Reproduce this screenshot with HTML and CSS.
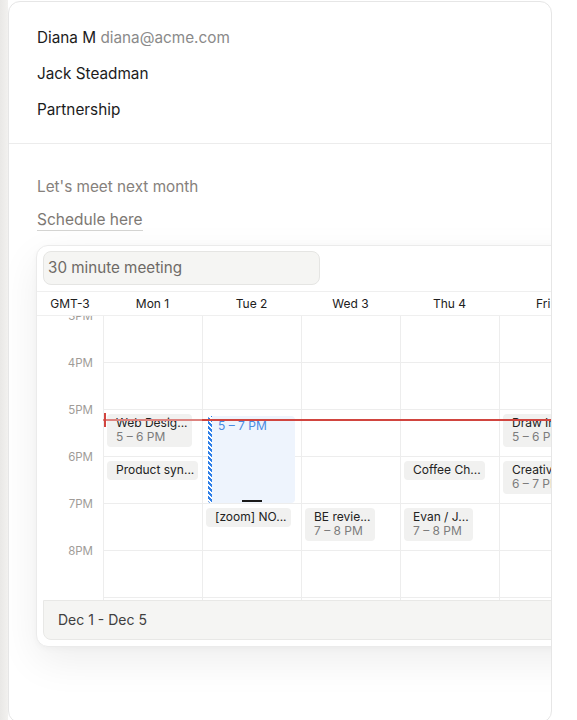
FILE: index.html
```html
<!DOCTYPE html>
<html>
<head>
<meta charset="utf-8">
<link rel="stylesheet" href="styles.css">
</head>
<body>
<div class="page">
  <div class="card">
    <div class="card-head">
      <div class="row"><span class="name">Diana M</span> <span class="email">diana@acme.com</span></div>
      <div class="row">Jack Steadman</div>
      <div class="row">Partnership</div>
    </div>
    <div class="card-body">
      <div class="note">Let's meet next month</div>
      <div class="link-row"><span class="link">Schedule here</span></div>
      <div class="widget">
        <div class="toolbar">
          <div class="input">30 minute meeting</div>
        </div>
        <div class="days-head">
          <div class="tz">GMT-3</div>
          <div class="dh">Mon 1</div>
          <div class="dh">Tue 2</div>
          <div class="dh">Wed 3</div>
          <div class="dh">Thu 4</div>
          <div class="dh">Fri 5</div>
        </div>
        <div class="grid">
          <div class="times">
            <div class="t"><span>3PM</span></div>
            <div class="t"><span>4PM</span></div>
            <div class="t"><span>5PM</span></div>
            <div class="t"><span>6PM</span></div>
            <div class="t"><span>7PM</span></div>
            <div class="t"><span>8PM</span></div>
          </div>
          <div class="day">
            <div class="event" style="top:98px"><div class="ev-title">Web Desig...</div><div class="ev-time">5 – 6 PM</div></div>
            <div class="event" style="top:145px"><div class="ev-title">Product syn...</div></div>
          </div>
          <div class="day">
            <div class="selection" style="top:100px;height:87px">
              <div class="stripe"></div>
              <div class="sel-time">5 – 7 PM</div>
              <div class="handle"></div>
            </div>
            <div class="event" style="top:192px"><div class="ev-title">[zoom] NO...</div></div>
          </div>
          <div class="day">
            <div class="event" style="top:192px"><div class="ev-title">BE revie...</div><div class="ev-time">7 – 8 PM</div></div>
          </div>
          <div class="day">
            <div class="event" style="top:145px"><div class="ev-title">Coffee Ch...</div></div>
            <div class="event" style="top:192px"><div class="ev-title">Evan / J...</div><div class="ev-time">7 – 8 PM</div></div>
          </div>
          <div class="day">
            <div class="event" style="top:98px"><div class="ev-title">Draw In...</div><div class="ev-time">5 – 6 PM</div></div>
            <div class="event" style="top:145px"><div class="ev-title">Creative...</div><div class="ev-time">6 – 7 PM</div></div>
          </div>
          <div class="now" style="top:103px"><div class="now-tick"></div></div>
        </div>
        <div class="footer">Dec 1 - Dec 5</div>
      </div>
    </div>
  </div>
</div>
</body>
</html>
```

FILE: styles.css
```css
* { box-sizing: border-box; }
html, body { margin: 0; padding: 0; }
body {
  background: linear-gradient(to right, #e9e8e6 0, #f2f1ef 8px, #ffffff 8px);
  font-family: Inter, "Noto Sans", sans-serif;
  color: #1a1a1a;
  height: 720px;
  overflow: hidden;
}
.page {
  padding: 1px 25px 0 8px;
}
.card {
  width: 544px;
  height: 722px;
  background: #fff;
  border: 1px solid #e6e6e6;
  border-radius: 12px;
  overflow: hidden;
}
.card-head {
  padding: 26px 28px 23px;
  display: flex;
  flex-direction: column;
  gap: 16px;
  border-bottom: 1px solid #ececec;
}
.row {
  font-size: 15.3px;
  line-height: 20px;
  color: #1c1c1c;
}
.email { color: #8a8a8a; }
.card-body {
  padding: 33px 28px 0 27px;
}
.note {
  font-size: 15.3px;
  line-height: 20px;
  color: #86817c;
  padding-left: 1px;
}
.link-row {
  margin-top: 13px;
  font-size: 15.5px;
  line-height: 20px;
  padding-left: 1px;
}
.link {
  color: #7d7873;
  border-bottom: 1px solid #d4d4d2;
  padding-bottom: 1px;
}
.widget {
  margin-top: 15px;
  width: 563px;
  border: 1px solid #ebebeb;
  border-radius: 12px;
  background: #fff;
  box-shadow: 0 14px 40px rgba(0,0,0,0.07), 0 2px 6px rgba(0,0,0,0.03);
}
.toolbar {
  padding: 5px 6px 6px;
  border-bottom: 1px solid #efefef;
}
.input {
  width: 277px;
  height: 34px;
  background: #f5f5f3;
  border: 1px solid #e5e5e3;
  border-radius: 8px;
  font-size: 15.2px;
  line-height: 32px;
  padding-left: 4px;
  color: #6e6a66;
}
.days-head {
  display: flex;
  height: 24px;
  border-bottom: 1px solid #efefef;
  font-size: 12px;
  line-height: 23px;
  color: #202020;
}
.tz { width: 66px; flex: none; text-align: center; }
.dh { width: 99px; flex: none; text-align: center; }
.grid {
  position: relative;
  display: flex;
  height: 284px;
  overflow: hidden;
}
.times {
  width: 66px;
  flex: none;
}
.t {
  height: 47px;
  text-align: right;
  padding-right: 10px;
}
.t span {
  display: block;
  transform: translateY(-7px);
  line-height: 14px;
  font-size: 11.5px;
  color: #a09c98;
}
.day {
  position: relative;
  width: 99px;
  flex: none;
  border-left: 1px solid #ededed;
  background: repeating-linear-gradient(to bottom, transparent 0 46px, #ededed 46px 47px);
}
.event {
  position: absolute;
  left: 3px;
  background: #f1f1f0;
  border-radius: 4px;
  padding: 2px 4px 3px 9px;
  font-size: 12px;
  line-height: 14px;
  white-space: nowrap;
}
.ev-title { color: #222; }
.ev-time { color: #7c7c7c; }
.selection {
  position: absolute;
  left: 5px;
  width: 87px;
  background: #eef4fd;
  border-radius: 4px;
  padding-left: 10px;
}
.stripe {
  position: absolute;
  left: 0;
  top: 0;
  bottom: 0;
  width: 4px;
  border-radius: 3px 0 0 3px;
  background: repeating-linear-gradient(45deg, #2f7fe8 0 2px, #ffffff 2px 3.5px);
}
.sel-time {
  font-size: 12px;
  line-height: 14px;
  padding-top: 3px;
  color: #4a8ae2;
}
.handle {
  position: absolute;
  bottom: 1px;
  left: 34px;
  width: 20px;
  height: 2px;
  background: #1a1a1a;
}
.now {
  position: absolute;
  left: 66px;
  right: 0;
  height: 2px;
  background: linear-gradient(to right, #dd8480 0 99px, #d1453f 99px);
}
.now-tick {
  position: absolute;
  left: 1px;
  top: -6px;
  width: 2px;
  height: 14px;
  background: #d1453f;
}
.footer {
  margin: 0 6px 6px;
  height: 40px;
  background: #f5f5f3;
  border: 1px solid #e8e8e6;
  border-radius: 0 0 8px 8px;
  font-size: 14px;
  line-height: 38px;
  padding-left: 14px;
  color: #404040;
}
```
